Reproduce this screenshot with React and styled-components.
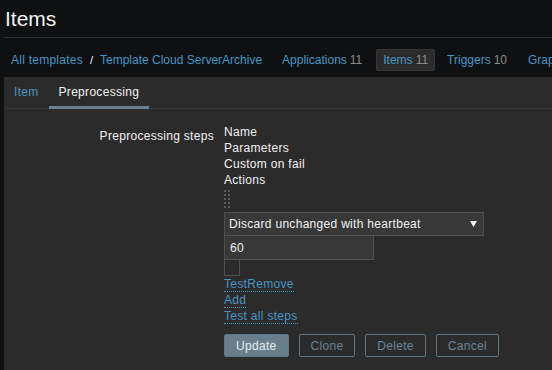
import React from "react";
import styled, { createGlobalStyle } from "styled-components";

const Global = createGlobalStyle`
  html, body { margin: 0; padding: 0; background: #0e1012; }
  body { font-family: "Liberation Sans", Arial, sans-serif; font-size: 12px; color: #f2f2f2; }
  * { box-sizing: border-box; }
`;

const Page = styled.div`
  min-height: 100vh;
  padding-left: 4px;
  display: flex;
  flex-direction: column;
  overflow: hidden;
`;

const Header = styled.div`
  height: 38px;
  border-bottom: 1px solid #2f2f2f;
  display: flex;
  align-items: flex-start;
`;

const Title = styled.h1`
  margin: 0;
  padding: 6px 0 0 1px;
  font-size: 21px;
  line-height: 26px;
  font-weight: normal;
  color: #f2f2f2;
`;

const Nav = styled.div`
  height: 39px;
  padding: 11px 0 6px 7px;
  display: flex;
  align-items: center;
  white-space: nowrap;
`;

const Crumb = styled.a`
  color: #4796c4;
  text-decoration: none;
  line-height: 22px;
  letter-spacing: ${(p) => p.$ls || 0}px;
`;

const Sep = styled.span`
  color: #f2f2f2;
  margin: 0 7px 0 7px;
  font-size: 11px;
`;

const NavItem = styled.span`
  height: 22px;
  line-height: 20px;
  padding: 0 6px;
  margin-left: ${(p) => p.$ml || 6}px;
  border: 1px solid ${(p) => (p.$active ? "#363636" : "transparent")};
  background: ${(p) => (p.$active ? "#2b2b2b" : "transparent")};
  border-radius: 2px;
  display: inline-flex;
  align-items: center;
  flex-shrink: 0;
`;

const NavLink = styled.span`
  color: #4796c4;
`;

const Count = styled.span`
  color: #8c8c8c;
  margin-left: 3px;
`;

const Panel = styled.div`
  flex: 1;
  background: #2b2b2b;
  letter-spacing: 0.3px;
`;

const Tabs = styled.div`
  height: 32px;
  border-bottom: 1px solid #383838;
  display: flex;
`;

const Tab = styled.div`
  height: 32px;
  margin-bottom: -1px;
  padding: 2px 10px 0 10px;
  line-height: 27px;
  color: ${(p) => (p.$active ? "#f2f2f2" : "#4796c4")};
  border-bottom: 3px solid ${(p) => (p.$active ? "#6c828e" : "transparent")};
`;

const Form = styled.div`
  display: grid;
  grid-template-columns: 210px 1fr;
  column-gap: 10px;
  padding-top: 15px;
`;

const Label = styled.div`
  text-align: right;
  padding-top: 4px;
  line-height: 16px;
`;

const Field = styled.div`
  display: flex;
  flex-direction: column;
  align-items: flex-start;
  line-height: 16px;
`;

const Line = styled.div`
  line-height: 16px;
`;

const Handle = styled.svg`
  display: block;
  margin-top: 2px;
  margin-bottom: 3px;
`;

const Select = styled.div`
  width: 260px;
  height: 24px;
  background: #383838;
  border: 1px solid #4f4f4f;
  display: flex;
  align-items: center;
  justify-content: space-between;
  padding: 0 6px 0 4px;
`;

const Input = styled.div`
  width: 150px;
  height: 24px;
  background: #383838;
  border: 1px solid #4f4f4f;
  border-top: none;
  display: flex;
  align-items: center;
  padding: 0 5px;
`;

const Check = styled.div`
  width: 16px;
  height: 16px;
  border: 1px solid #4f4f4f;
  border-top: none;
`;

const LinkRow = styled.div`
  line-height: 16px;
  height: 16px;
`;

const DLink = styled.a`
  color: #4796c4;
  text-decoration: none;
  border-bottom: 1px dotted #4796c4;
`;

const Buttons = styled.div`
  grid-column: 2;
  display: flex;
  gap: 10px;
  margin-top: 10px;
`;

const Button = styled.button`
  height: 23px;
  padding: 0 11px;
  font-family: "Liberation Sans", Arial, sans-serif;
  font-size: 12px;
  letter-spacing: 0.3px;
  border-radius: 2px;
  border: 1px solid #5f7682;
  background: ${(p) => (p.$primary ? "#687f8b" : "transparent")};
  color: ${(p) => (p.$primary ? "#e8ecee" : "#6d8593")};
`;

export default function App() {
  return (
    <>
      <Global />
      <Page>
        <Header>
          <Title>Items</Title>
        </Header>
        <Nav>
          <Crumb $ls={0.25}>All templates</Crumb>
          <Sep>/</Sep>
          <Crumb>Template Cloud ServerArchive</Crumb>
          <NavItem $ml={13}>
            <NavLink>Applications</NavLink>
            <Count>11</Count>
          </NavItem>
          <NavItem $active $ml={7}>
            <NavLink>Items</NavLink>
            <Count>11</Count>
          </NavItem>
          <NavItem $ml={5}>
            <NavLink>Triggers</NavLink>
            <Count>10</Count>
          </NavItem>
          <NavItem $ml={7}>
            <NavLink>Graphs</NavLink>
            <Count>1</Count>
          </NavItem>
        </Nav>
        <Panel>
          <Tabs>
            <Tab>Item</Tab>
            <Tab $active>Preprocessing</Tab>
          </Tabs>
          <Form>
            <Label>Preprocessing steps</Label>
            <Field>
              <Line>Name</Line>
              <Line>Parameters</Line>
              <Line>Custom on fail</Line>
              <Line>Actions</Line>
              <Handle width="6" height="19" viewBox="0 0 6 19">
                {[0, 4, 8, 12, 16].map((y) => (
                  <g key={y} fill="#5a5a5a">
                    <rect x="0" y={y} width="2" height="2" />
                    <rect x="4" y={y} width="2" height="2" />
                  </g>
                ))}
              </Handle>
              <Select>
                <span>Discard unchanged with heartbeat</span>
                <svg width="7" height="6" viewBox="0 0 7 6">
                  <polygon points="0,0 7,0 3.5,6" fill="#f2f2f2" />
                </svg>
              </Select>
              <Input>60</Input>
              <Check />
              <LinkRow>
                <DLink>TestRemove</DLink>
              </LinkRow>
              <LinkRow>
                <DLink>Add</DLink>
              </LinkRow>
              <LinkRow>
                <DLink>Test all steps</DLink>
              </LinkRow>
            </Field>
            <Buttons>
              <Button $primary>Update</Button>
              <Button>Clone</Button>
              <Button>Delete</Button>
              <Button>Cancel</Button>
            </Buttons>
          </Form>
        </Panel>
      </Page>
    </>
  );
}
